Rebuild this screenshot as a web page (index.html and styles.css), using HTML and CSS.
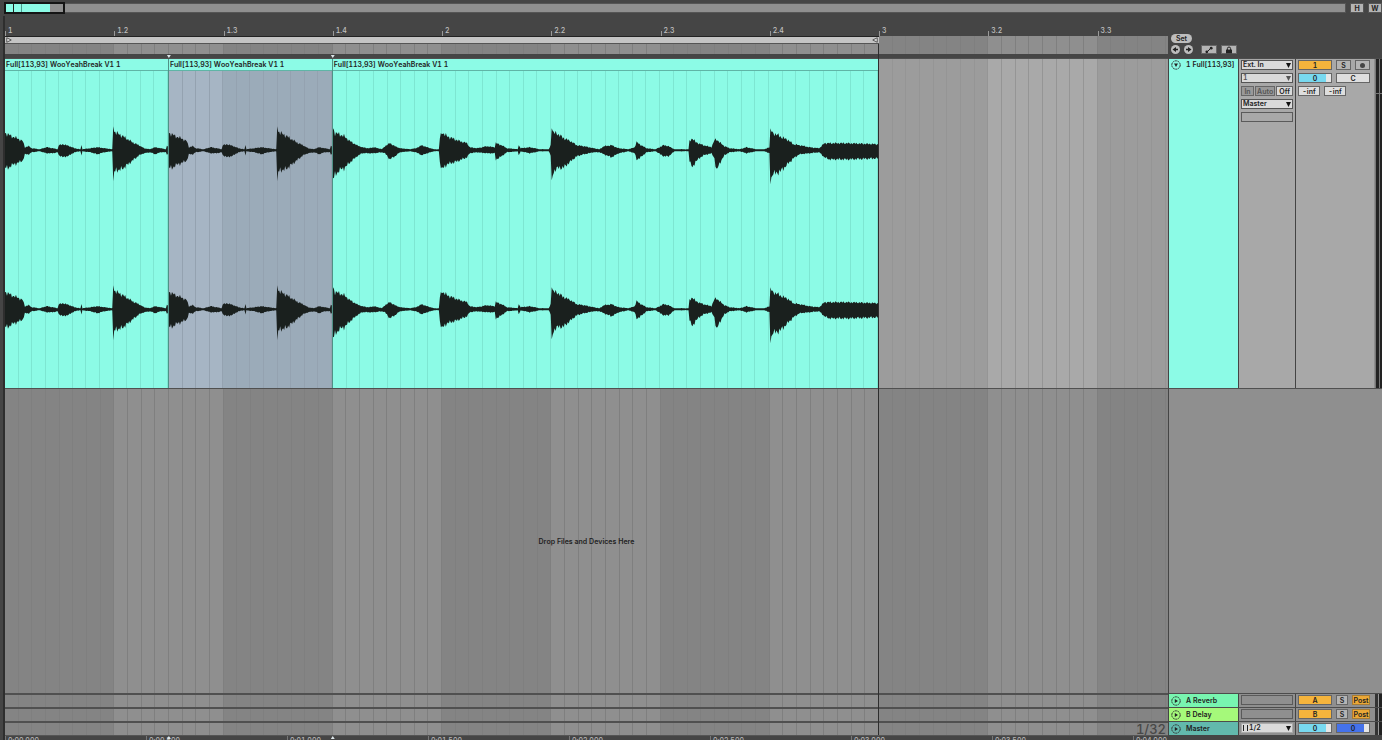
FILE: index.html
```html
<!DOCTYPE html>
<html lang="en">
<head>
<meta charset="utf-8">
<title>Arrangement</title>
<link rel="stylesheet" href="styles.css">
</head>
<body>
<header class="topbar">
  <div class="overview">
    <div class="overview-clips"></div>
    <div class="overview-window"></div>
  </div>
  <button class="btn top-btn" type="button">H</button>
  <button class="btn top-btn" type="button">W</button>
</header>
<main class="workspace">
  <section class="timeline" aria-label="Timeline">
    <div class="rulers">
      <div class="beats">
        <span>1</span><span>1.2</span><span>1.3</span><span>1.4</span><span>2</span><span>2.2</span><span>2.3</span><span>2.4</span><span>3</span><span>3.2</span><span>3.3</span>
      </div>
      <div class="scrub striped">
        <div class="loop">
          <svg viewBox="0 0 8 8"><path d="M1 1L7 4L1 7Z"/></svg>
          <svg viewBox="0 0 8 8"><path d="M7 1L1 4L7 7Z"/></svg>
        </div>
      </div>
    </div>
    <div class="lane striped">
      <article class="clip short">
        <h2>Full[113,93] WooYeahBreak V1 1</h2>
        <div class="clip-body"><svg class="wave" data-wave="short"></svg><svg class="wave" data-wave="short"></svg></div>
      </article>
      <article class="clip short selected">
        <h2>Full[113,93] WooYeahBreak V1 1</h2>
        <div class="clip-body"><svg class="wave" data-wave="short"></svg><svg class="wave" data-wave="short"></svg></div>
      </article>
      <article class="clip long">
        <h2>Full[113,93] WooYeahBreak V1 1</h2>
        <div class="clip-body"><svg class="wave" data-wave="long"></svg><svg class="wave" data-wave="long"></svg></div>
      </article>
    </div>
    <div class="drop striped"><p>Drop Files and Devices Here</p></div>
    <div class="return-lane striped"></div>
    <div class="return-lane striped"></div>
    <div class="return-lane striped"><span class="grid-size">1/32</span></div>
    <div class="times">
      <span>0:00.000</span><span>0:00.500</span><span>0:01.000</span><span>0:01.500</span><span>0:02.000</span><span>0:02.500</span><span>0:03.000</span><span>0:03.500</span><span>0:04.000</span>
    </div>
    <div class="end-line"></div>
    <i class="pin pin-a"></i><i class="pin pin-b"></i>
    <i class="pin pin-a low"></i><i class="pin pin-b low"></i>
  </section>

  <aside class="panel" aria-label="Tracks">
    <div class="panel-head">
      <button class="set" type="button">Set</button>
      <div class="tools">
        <button class="round" type="button" aria-label="Previous locator"><svg viewBox="0 0 9 9"><path d="M1.5 4.5L5 2V3.7H7V5.3H5V7Z"/></svg></button>
        <button class="round" type="button" aria-label="Next locator"><svg viewBox="0 0 9 9"><path d="M7.5 4.5L4 2V3.7H2V5.3H4V7Z"/></svg></button>
        <button class="btn tool first" type="button" aria-label="Automation"><svg viewBox="0 0 12 8"><path d="M3.5 6.5L8.5 1.5" stroke="#222" stroke-width="1"/><circle cx="3.8" cy="5.8" r="1.4"/><circle cx="8.2" cy="2.2" r="1.4"/></svg></button>
        <button class="btn tool" type="button" aria-label="Lock"><svg viewBox="0 0 12 8"><path d="M3 3.6H9V7.4H3Z"/><path d="M4.4 4V2.6Q4.4 1 6 1T7.6 2.6V4" fill="none" stroke="#222"/></svg></button>
      </div>
    </div>

    <div class="track main-track">
      <div class="name teal"><svg class="fold" viewBox="0 0 10 10"><circle cx="5" cy="5" r="4.2"/><path d="M3 3.6H7L5 7Z"/></svg><span>1 Full[113,93]</span></div>
      <div class="io">
        <label class="pick"><select aria-label="Input type"><option>Ext. In</option></select></label>
        <label class="pick dim"><select aria-label="Input channel"><option>1</option></select></label>
        <div class="monitor"><button class="btn off" type="button">In</button><button class="btn off wide" type="button">Auto</button><button class="btn lit" type="button">Off</button></div>
        <label class="pick"><select aria-label="Output"><option>Master</option></select></label>
        <div class="slot"></div>
      </div>
      <div class="mixer">
        <div class="mix-row"><button class="btn orange" type="button">1</button><button class="btn small" type="button">S</button><button class="btn small" type="button" aria-label="Arm"><i class="dot"></i></button></div>
        <div class="mix-row"><input class="value level" aria-label="Volume" value="0"><input class="value" aria-label="Pan" value="C"></div>
        <div class="mix-row"><input class="value send" aria-label="Send A" value="-inf"><input class="value send" aria-label="Send B" value="-inf"></div>
      </div>
      <div class="meter tall"></div>
    </div>

    <div class="empty"></div>

    <div class="track">
      <div class="name green"><svg class="fold" viewBox="0 0 10 10"><circle cx="5" cy="5" r="4.2"/><path d="M3.8 3L7 5L3.8 7Z"/></svg><span>A Reverb</span></div>
      <div class="io"><div class="slot"></div></div>
      <div class="mixer"><div class="mix-row"><button class="btn orange" type="button">A</button><button class="btn solo" type="button">S</button><button class="btn post" type="button">Post</button></div></div>
      <div class="meter"></div>
    </div>
    <div class="track">
      <div class="name lime"><svg class="fold" viewBox="0 0 10 10"><circle cx="5" cy="5" r="4.2"/><path d="M3.8 3L7 5L3.8 7Z"/></svg><span>B Delay</span></div>
      <div class="io"><div class="slot"></div></div>
      <div class="mixer"><div class="mix-row"><button class="btn orange" type="button">B</button><button class="btn solo" type="button">S</button><button class="btn post" type="button">Post</button></div></div>
      <div class="meter"></div>
    </div>
    <div class="track">
      <div class="name sea"><svg class="fold" viewBox="0 0 10 10"><circle cx="5" cy="5" r="4.2"/><path d="M3.8 3L7 5L3.8 7Z"/></svg><span>Master</span></div>
      <div class="io"><label class="pick cue"><select aria-label="Cue output"><option>1/2</option></select></label></div>
      <div class="mixer"><div class="mix-row"><input class="value level" aria-label="Master volume" value="0"><input class="value blue" aria-label="Cue volume" value="0"></div></div>
      <div class="meter"></div>
    </div>
  </aside>
</main>
<script src="waves.js"></script>
</body>
</html>
```
FILE: styles.css
```css
:root {
  --beat: 9.394%;
  --cell: 1.17425%;
  --teal: #8cfbe6;
  --dark: #454545;
  --ink: #222;
}
* { box-sizing: border-box; }
body {
  margin: 0;
  height: 100vh;
  display: flex;
  flex-direction: column;
  overflow: hidden;
  background: var(--dark);
  color: var(--ink);
  font: 600 7px/9px Inter, "Liberation Sans", sans-serif;
  font-variant-numeric: tabular-nums;
  font-kerning: none;
}
button, input, select {
  margin: 0;
  padding: 0;
  border: 0;
  border-radius: 0;
  color: inherit;
  font: inherit;
  appearance: none;
}
svg { display: block; }

.topbar {
  flex: none;
  height: 16px;
  display: flex;
  gap: 4px;
  padding: 3px 0 3px 5px;
}
.overview {
  flex: 1;
  position: relative;
  background: #8f8f8f;
  border: 1px solid #555;
  border-left: 0;
}
.overview-clips {
  width: 45px;
  height: 100%;
  background:
    linear-gradient(#222, #222) 8px 0 / 1px 100% no-repeat,
    linear-gradient(#4b9c8f, #4b9c8f) 16px 0 / 1px 100% no-repeat,
    var(--teal);
}
.overview-window {
  position: absolute;
  left: -1px;
  top: -2px;
  width: 61px;
  height: 12px;
  border: 2px solid #151515;
}
.btn {
  display: flex;
  align-items: center;
  justify-content: center;
  background: #b4b4b4;
  border: 1px solid #666;
  line-height: 7px;
}
.top-btn { width: 14px; border-color: #555; font-weight: 700; }

.workspace {
  flex: 1;
  min-height: 0;
  display: grid;
  grid-template-columns: 1fr 214px;
}
.timeline, .panel {
  display: grid;
  grid-template-rows: 42px 331px 1fr 14px 14px 14px 5px;
  min-width: 0;
}
.timeline {
  position: relative;
  margin-left: 3px;
  border-left: 2px solid #2e2e2e;
}
.rulers { display: flex; flex-direction: column; overflow: hidden; }
.beats { display: flex; height: 20px; align-items: flex-end; color: #c0c0c0; font-weight: 500; overflow: hidden; }
.beats span {
  flex: none;
  width: var(--beat);
  height: 10px;
  padding-left: 3px;
  background: linear-gradient(#999, #999) left bottom / 1px 5px no-repeat;
}
.striped {
  background:
    repeating-linear-gradient(to right, #0000 0 calc(var(--cell) - 1px), var(--line) calc(var(--cell) - 1px) var(--cell)),
    repeating-linear-gradient(to right, var(--even) 0 var(--beat), var(--odd) var(--beat) 18.788%);
  --even: #848484;
  --odd: #8f8f8f;
  --line: #7f7f7f;
}
.scrub { height: 18px; }
.loop {
  width: 75.15%;
  height: 8px;
  display: flex;
  justify-content: space-between;
  background: #c4c4c4;
  border-top: 1px solid #222;
  border-bottom: 1px solid #555;
}
.loop svg { width: 8px; height: 6px; fill: #ddd; stroke: #333; }

.lane {
  --even: #9c9c9c;
  --odd: #a9a9a9;
  --line: #959595;
  display: flex;
  border-top: 1px solid #505050;
  border-bottom: 1px solid #505050;
}
.clip {
  flex: none;
  display: flex;
  flex-direction: column;
  overflow: hidden;
  border-right: 1px solid #4f9186;
}
.clip.short { width: 14.091%; --cells: 12; }
.clip.long { width: 46.97%; --cells: 40; border-color: #333; }
.clip h2 {
  margin: 0;
  height: 12px;
  padding: 1px 1px;
  background: var(--teal);
  border-bottom: 1px solid #5fb5a6;
  font: inherit;
  font-variant-numeric: inherit;
  font-kerning: inherit;
  white-space: nowrap;
}
.clip-body {
  flex: 1;
  min-height: 0;
  display: flex;
  flex-direction: column;
  background: repeating-linear-gradient(to right, #0000 0 calc(100% / var(--cells) - 1px), #7de6d2 calc(100% / var(--cells) - 1px) calc(100% / var(--cells))), var(--teal);
}
.selected .clip-body {
  background:
    repeating-linear-gradient(to right, #0000 0 calc(100% / 12 - 1px), #94a2b0 calc(100% / 12 - 1px) calc(100% / 12)),
    linear-gradient(to right, #a6b5c4 33%, #9babb9 33%);
}
.wave { flex: 1; width: 100%; min-height: 0; fill: #1a201e; }

.drop { display: flex; align-items: center; justify-content: center; }
.drop p { margin: 0; }
.return-lane { border-top: 2px solid #505050; display: flex; justify-content: flex-end; }
.grid-size { padding-right: 2px; color: #484848; font-size: 13px; line-height: 12px; font-weight: 500; }
.times { display: flex; overflow: hidden; color: #b5b5b5; border-top: 1px solid #555; font-weight: 500; }
.times span { flex: none; width: 12.125%; padding: 0 2px; border-left: 1px solid #777; }
.end-line {
  position: absolute;
  left: 75.15%;
  top: 28px;
  bottom: 5px;
  width: 1px;
  margin-left: -1px;
  background: #2d2d2d;
}
.pin {
  position: absolute;
  top: 39px;
  width: 4px;
  height: 3px;
  margin-left: -2px;
  background: #dde6ea;
  clip-path: polygon(0 0, 100% 0, 50% 100%);
}
.pin-a { left: 14.091%; }
.pin-b { left: 28.182%; }
.pin.low { top: auto; bottom: 1px; clip-path: polygon(50% 0, 100% 100%, 0 100%); }

.panel { padding-left: 1px; }
.panel-head { padding: 18px 2px 3px; display: flex; flex-direction: column; gap: 2px; align-items: flex-start; }
.set { width: 21px; height: 9px; border-radius: 5px; background: #bdbdbd; line-height: 9px; }
.tools { display: flex; gap: 4px; }
.round { width: 9px; height: 9px; border-radius: 50%; background: #bdbdbd; fill: #222; }
.tool { width: 16px; height: 9px; fill: #222; }
.tool svg { width: 12px; height: 8px; }
.tool.first { margin-left: 4px; }

.track {
  display: grid;
  grid-template-columns: 69px 56px 78px 8px;
  column-gap: 1px;
  border-top: 1px solid #4c4c4c;
  background: linear-gradient(to right, #444 127px, #8f8f8f 127px);
}
.main-track { border-bottom: 1px solid #505050; }
.name { display: flex; align-items: center; gap: 5px; padding: 0 2px; overflow: hidden; white-space: nowrap; }
.main-track .name { align-items: flex-start; padding-top: 1px; }
.fold { flex: none; width: 10px; height: 10px; fill: #222; }
.fold circle { fill: none; stroke: #333; stroke-width: 1; stroke-dasharray: 2 0.6; }
.teal { background: var(--teal); }
.green { background: #78f5b0; }
.lime { background: #a5f97a; }
.sea { background: #62b9ad; }
.io, .mixer { display: flex; flex-direction: column; gap: 3px; padding: 1px 2px; background: #8f8f8f; }
.main-track .io, .main-track .mixer { background: #a8a8a8; }
.track .mixer { padding-right: 4px; }
.slot { height: 10px; border: 1px solid #5a5a5a; }
.pick { position: relative; display: block; height: 10px; background: #dadada; border: 1px solid #555; }
.pick select { display: block; width: 100%; height: 8px; padding-left: 1px; background: none; line-height: 8px; }
.pick::after {
  content: "";
  position: absolute;
  right: 1px;
  top: 2px;
  width: 5px;
  height: 5px;
  background: #111;
  clip-path: polygon(0 0, 100% 0, 50% 100%);
}
.dim { color: #555; }
.dim::after { background: #555; }
.cue { border-color: #aaa; }
.pick.cue select { padding-left: 7px; }
.cue::before {
  content: "";
  position: absolute;
  left: 1px;
  top: 1px;
  width: 3px;
  height: 6px;
  border: solid #222;
  border-width: 0 1px;
}
.monitor { display: flex; gap: 1px; height: 10px; }
.monitor .btn { flex: 3; overflow: hidden; }
.monitor .wide { flex: 5; }
.off { background: #999; color: #555; }
.monitor .lit { flex: 4; background: #dadada; }
.mix-row { display: flex; gap: 4px; height: 10px; }
.mix-row > * { flex: none; }
.orange { width: 34px; background: #f5b43c; }
.small { width: 15px; }
.solo { width: 12px; }
.post { width: 18px; background: #eba836; border-color: #a67c35; }
.dot { width: 5px; height: 5px; border-radius: 50%; background: #444; }
.value { width: 34px; min-width: 0; height: 10px; border: 1px solid #666; background: #dedede; text-align: center; line-height: 8px; }
.level { background: linear-gradient(to right, #78d9f0 84%, #e6e6e6 84%); }
.blue { background: linear-gradient(to right, #4572ea 84%, #e6e6e6 84%); }
.send { width: 22px; }
.meter { background: linear-gradient(to right, #333 0 3px, #999 3px 4px, #222 4px 7px, #8f8f8f 7px); }
.tall { background: linear-gradient(#777, #777) 0 34px / 100% 1px no-repeat, linear-gradient(to right, #777 0 1px, #222 1px 4px, #777 4px 5px, #222 5px); }
.empty { background: #8f8f8f; }
```
FILE: waves.js
```js
// Envelope points: [position, height above the axis, depth below the axis].
const SHAPES = {
  short: {
    width: 164,
    points: [[0,17,17],[3,16,18],[6,14,15],[12,12,13],[18,9,10],[20,3,4],[24,4,4],[27,2,2],[35,1,1],[42,3,3],[48,2,3],[53,1,2],[54,5,5],[59,6,7],[65,4,5],[70,2,2],[76,1,1],[77,5,5],[78,1,1],[86,2,2],[93,3,4],[100,2,2],[108,1,1],[109,24,31],[110,19,22],[112,17,19],[115,16,20],[120,13,17],[125,10,13],[130,7,9],[135,5,5],[140,2,3],[146,1,2],[151,3,4],[157,2,2],[162,1,2],[163,4,4],[164,4,4]]
  },
  long: {
    width: 546,
    points: [[0,22,28],[2,17,25],[6,16,20],[11,14,18],[17,9,12],[24,5,6],[29,3,3],[36,2,3],[41,3,3],[49,1,2],[52,4,3],[57,7,9],[62,4,6],[67,2,2],[77,1,1],[83,2,2],[89,5,5],[94,3,3],[101,1,1],[106,1,1],[107,12,12],[109,18,19],[114,14,14],[124,10,11],[134,7,7],[137,3,3],[144,2,2],[154,4,3],[162,3,3],[163,7,9],[169,5,6],[174,2,2],[185,1,1],[186,5,5],[188,2,1],[197,3,3],[207,1,1],[216,1,1],[218,5,5],[219,22,30],[221,17,21],[224,17,18],[231,12,17],[238,9,11],[244,5,6],[251,4,4],[261,2,2],[267,1,2],[271,4,4],[279,5,7],[286,2,3],[296,1,1],[302,3,3],[304,8,9],[307,6,8],[314,2,2],[323,1,1],[331,5,6],[336,4,6],[342,1,1],[356,1,1],[357,9,10],[360,12,18],[363,8,11],[371,5,5],[379,3,3],[382,10,8],[384,11,21],[387,8,13],[392,4,5],[397,2,2],[407,1,1],[414,3,3],[424,1,1],[432,1,1],[437,3,3],[438,22,34],[440,17,23],[444,16,23],[449,13,20],[456,10,13],[461,6,8],[467,5,4],[477,3,3],[487,2,2],[492,7,7],[497,7,9],[514,7,9],[546,6,8]]
  }
};

function buildPath({ width, points }) {
  const top = [];
  const bottom = [];
  let segment = 0;
  for (let x = 0; x <= width; x += 1) {
    while (segment < points.length - 2 && points[segment + 1][0] <= x) segment += 1;
    const [x0, up0, down0] = points[segment];
    const [x1, up1, down1] = points[segment + 1];
    const t = (x - x0) / (x1 - x0);
    const up = up0 + (up1 - up0) * t;
    const down = down0 + (down1 - down0) * t;
    // Transient peaks keep their full height; the decay behind them is rippled.
    const ripple = up > 20 ? 1 : 1 + 0.12 * Math.sin(x * 2.4) + 0.06 * Math.sin(x * 5.3);
    top.push(`${x} ${(-up * ripple).toFixed(1)}`);
    bottom.unshift(`${x} ${(down * ripple).toFixed(1)}`);
  }
  return `M${top.join("L")}L${bottom.join("L")}Z`;
}

document.querySelectorAll(".wave").forEach((svg) => {
  const shape = SHAPES[svg.dataset.wave];
  svg.setAttribute("viewBox", `0 -79 ${shape.width} 158`);
  svg.setAttribute("preserveAspectRatio", "none");
  const path = document.createElementNS("http://www.w3.org/2000/svg", "path");
  path.setAttribute("d", buildPath(shape));
  svg.append(path);
});
```
